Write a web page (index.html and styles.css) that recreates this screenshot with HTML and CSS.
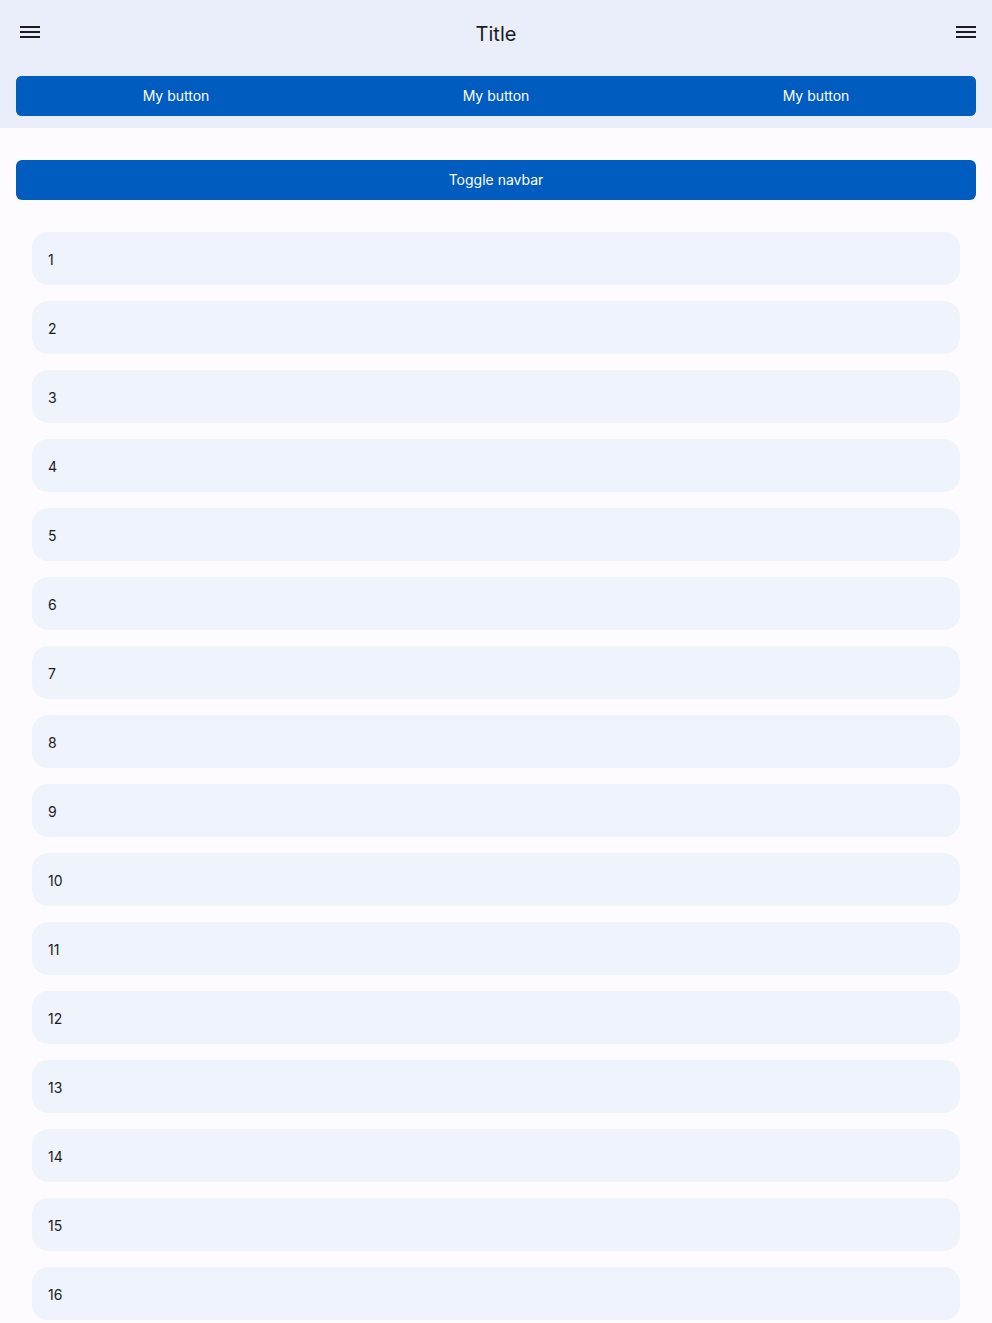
FILE: index.html
```html
<!DOCTYPE html>
<html>
<head>
<meta charset="utf-8">
<link rel="stylesheet" href="styles.css">
</head>
<body>
<header class="appbar">
  <div class="topbar">
    <button class="icon-btn" aria-label="menu">
      <svg width="20" height="14" viewBox="0 0 20 14"><path d="M0 1h20M0 6h20M0 11h20" stroke="#1b1b1f" stroke-width="2" fill="none"/></svg>
    </button>
    <h1 class="title">Title</h1>
    <button class="icon-btn icon-btn-end" aria-label="menu">
      <svg width="20" height="14" viewBox="0 0 20 14"><path d="M0 1h20M0 6h20M0 11h20" stroke="#1b1b1f" stroke-width="2" fill="none"/></svg>
    </button>
  </div>
  <div class="btn-group">
    <button class="seg">My button</button>
    <button class="seg">My button</button>
    <button class="seg">My button</button>
  </div>
</header>
<main class="content">
  <button class="toggle">Toggle navbar</button>
  <ul class="list">
    <li class="item">1</li>
    <li class="item">2</li>
    <li class="item">3</li>
    <li class="item">4</li>
    <li class="item">5</li>
    <li class="item">6</li>
    <li class="item">7</li>
    <li class="item">8</li>
    <li class="item">9</li>
    <li class="item">10</li>
    <li class="item">11</li>
    <li class="item">12</li>
    <li class="item">13</li>
    <li class="item">14</li>
    <li class="item">15</li>
    <li class="item">16</li>
  </ul>
</main>
</body>
</html>
```
FILE: styles.css
```css
* { box-sizing: border-box; }
html, body { margin: 0; padding: 0; }
body {
  background: #fdfbff;
  font-family: Inter, "Noto Sans", sans-serif;
  color: #1b1b1f;
}
.appbar {
  background: #eaeefa;
  padding: 0 16px 12px;
}
.topbar {
  height: 64px;
  display: flex;
  align-items: center;
  justify-content: space-between;
  padding-top: 2px;
}
.icon-btn {
  background: none;
  border: 0;
  padding: 0;
  width: 28px;
  height: 28px;
  display: flex;
  align-items: center;
  justify-content: center;
  cursor: pointer;
}
.icon-btn-end {
  justify-content: flex-end;
}
.title {
  margin: 0;
  padding-top: 2px;
  font-size: 20px;
  font-weight: 400;
  color: #1b1b1f;
}
.btn-group {
  margin-top: 12px;
  display: grid;
  grid-template-columns: repeat(3, 1fr);
  height: 40px;
  background: #005cbf;
  border-radius: 6px;
  overflow: hidden;
}
.seg, .toggle {
  background: #005cbf;
  color: #ffffff;
  border: 0;
  padding: 0 0 1px;
  font-family: Inter, "Noto Sans", sans-serif;
  font-size: 14px;
  font-weight: 400;
  cursor: pointer;
}
.content {
  padding: 32px 16px 0;
}
.toggle {
  width: 100%;
  height: 40px;
  border-radius: 6px;
  display: block;
}
.list {
  list-style: none;
  margin: 32px 0 0;
  padding: 0 16px;
  display: flex;
  flex-direction: column;
  gap: 16px;
}
.item {
  height: 53px;
  background: #eff3fc;
  border-radius: 16px;
  display: flex;
  align-items: center;
  padding: 1px 16px 0;
  font-size: 14px;
  color: #1b1b1f;
}
```
